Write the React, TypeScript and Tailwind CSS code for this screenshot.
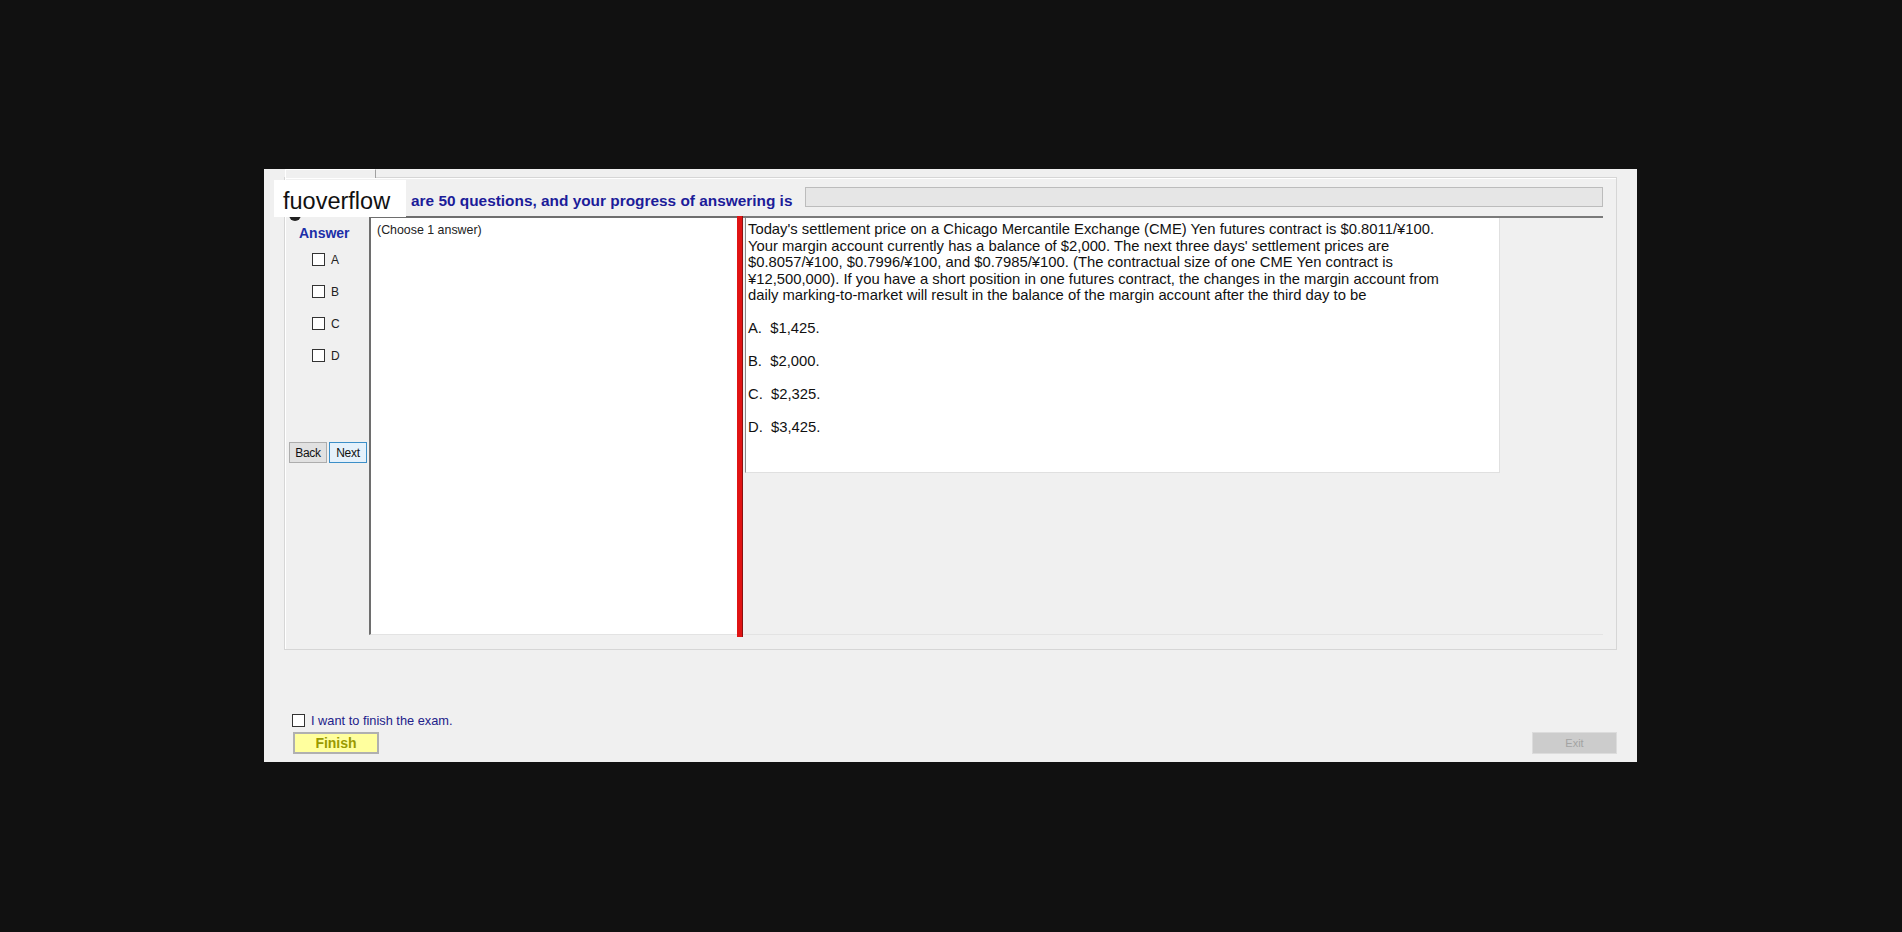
const font = { fontFamily: '"Liberation Sans", Arial, sans-serif' };

const questionLines = [
  "Today's settlement price on a Chicago Mercantile Exchange (CME) Yen futures contract is $0.8011/¥100.",
  "Your margin account currently has a balance of $2,000. The next three days' settlement prices are",
  "$0.8057/¥100, $0.7996/¥100, and $0.7985/¥100. (The contractual size of one CME Yen contract is",
  "¥12,500,000). If you have a short position in one futures contract, the changes in the margin account from",
  "daily marking-to-market will result in the balance of the margin account after the third day to be",
];

const choices = ["A.  $1,425.", "B.  $2,000.", "C.  $2,325.", "D.  $3,425."];

const Box = () => (
  <div className="w-[13px] h-[13px] shrink-0 border border-[#333333] bg-white" />
);

const App = () => {
  return (
    <div className="w-full h-[932px] bg-[#111111] pt-[169px] pl-[264px]" style={font}>
      <div className="relative w-[1373px] h-[593px] bg-[#f0f0f0]">
        {/* tab strip */}
        <div className="flex h-[8px] pl-[21px]">
          <div className="w-[91px] h-[9px] border-l border-r border-t border-l-white border-t-white border-r-[#a0a0a0] bg-[#f0f0f0]" />
        </div>

        {/* tab page */}
        <div className="ml-[20px] w-[1333px] h-[473px] border border-[#d6d6d6] shadow-[inset_1px_1px_0_#ffffff] flex flex-col">
          <div className="flex items-start h-[38px]">
            <div className="ml-[126px] w-[394px] mt-[14px] leading-[18px] text-[15.4px] font-bold text-[#1c1c99] whitespace-nowrap">
              are 50 questions, and your progress of answering is
            </div>
            <div className="mt-[9px] w-[798px] h-[20px] border border-[#bcbcbc] bg-[#e6e6e6]" />
          </div>

          <div className="flex ml-[4px] w-[1314px] h-[419px]">
            {/* answer column */}
            <div className="w-[80px] shrink-0 flex flex-col">
              <div className="pt-[9px] pl-[10px] leading-[16px] text-[14px] font-bold text-[#1c2fa8]">
                Answer
              </div>
              <div className="flex flex-col gap-[19px] mt-[12px] pl-[23px]">
                {["A", "B", "C", "D"].map((l) => (
                  <div key={l} className="flex items-center h-[13px] gap-[6px] text-[12px] text-[#222222]">
                    <Box />
                    <span>{l}</span>
                  </div>
                ))}
              </div>
              <div className="flex gap-[2px] mt-[80px]">
                <button className="w-[38px] h-[21px] border border-[#adadad] bg-[#e1e1e1] text-[12px] text-[#111111] tracking-[-0.3px]">
                  Back
                </button>
                <button className="w-[38px] h-[21px] border border-[#3c8fc8] bg-[#e5f1fb] text-[12px] text-[#111111] tracking-[-0.3px]">
                  Next
                </button>
              </div>
            </div>

            {/* choose box */}
            <div className="w-[368px] shrink-0 h-[419px] bg-white border-l-2 border-t-2 border-[#6e6e6e] border-b border-b-[#e3e3e3] pl-[6px] pt-[5px] text-[12.4px] leading-[15px] text-[#222222]">
              (Choose 1 answer)
            </div>

            {/* splitter */}
            <div className="w-[6px] shrink-0 h-[421px] bg-[#e01414] border-r border-[#8c1010]" />

            {/* question area */}
            <div className="flex-1 h-[419px] border-t-2 border-[#7a7a7a] border-b border-b-[#e3e3e3] pl-[2px]">
              <div className="w-[755px] h-[255px] bg-white border-l border-[#8a8a8a] border-r border-r-[#e0e0e0] border-b border-b-[#e0e0e0] pl-[2px] pt-[3px] text-[14.8px] leading-[16.5px] text-[#111111]">
                {questionLines.map((t) => (
                  <div key={t} className="whitespace-nowrap">{t}</div>
                ))}
                {choices.map((c) => (
                  <div key={c} className="mt-[16.5px] whitespace-pre">{c}</div>
                ))}
              </div>
            </div>
          </div>
        </div>

        {/* bottom controls */}
        <div className="flex items-center h-[13px] mt-[64px] pl-[28px] gap-[6px]">
          <Box />
          <span className="text-[12.8px] leading-[14px] text-[#22228a]">
            I want to finish the exam.
          </span>
        </div>
        <div className="flex justify-between mt-[5px] pl-[29px] pr-[20px]">
          <button className="w-[86px] h-[22px] bg-[#ffff9e] border-2 border-[#b0b0b0] text-[14px] font-bold text-[#9a9a00] leading-[18px]">
            Finish
          </button>
          <button className="w-[85px] h-[22px] bg-[#cccccc] border border-[#dcdcdc] text-[11px] text-[#a3a3a3]">
            Exit
          </button>
        </div>

        {/* watermark overlay */}
        <div className="absolute left-[25px] top-[40px] w-[12px] h-[12px] rounded-full bg-[#222222]" />
        <div className="absolute left-[10px] top-[11px] w-[132px] h-[37px] bg-white flex items-center pl-[9px] pt-[6px] text-[23.5px] text-[#111111]">
          fuoverflow
        </div>
      </div>
    </div>
  );
};

export default App;
